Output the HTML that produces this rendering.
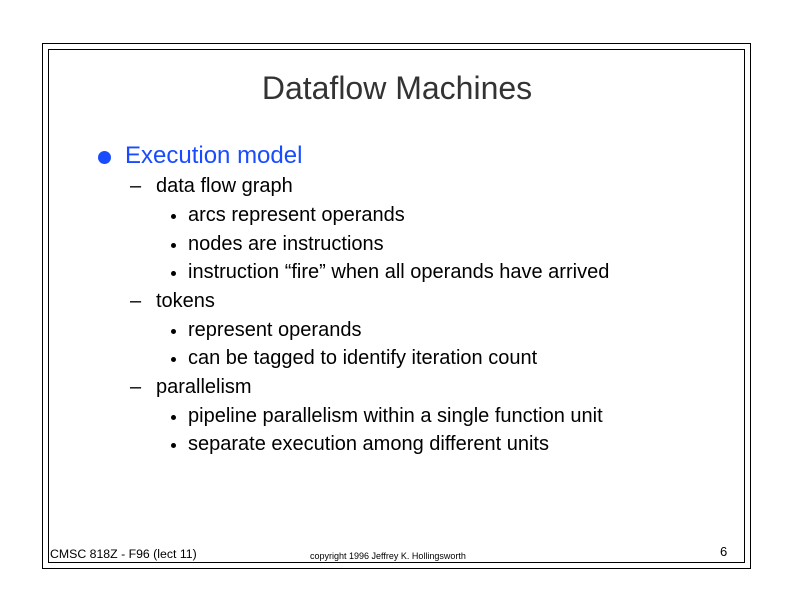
<!DOCTYPE html>
<html><head><style>
body{margin:0;width:792px;height:612px;background:#fff;position:relative;overflow:hidden;font-family:"Liberation Sans",sans-serif;}
.b{position:absolute;border:1.3px solid #000;}
.t{position:absolute;white-space:nowrap;color:#000;}
.l2{font-size:20px;left:156px;}
.l3{font-size:20px;left:188px;}
.d{position:absolute;font-size:20px;left:130px;}
.dot{position:absolute;left:171px;width:5px;height:5px;border-radius:50%;background:#000;}
</style></head><body>
<div class="b" style="left:42px;top:43px;width:707px;height:524px"></div>
<div class="b" style="left:48px;top:49px;width:695px;height:512px"></div>
<div class="t" style="left:0;width:794px;text-align:center;top:70px;font-size:32px;color:#333">Dataflow Machines</div>
<div style="position:absolute;left:98px;top:151px;width:13px;height:13px;border-radius:50%;background:#1a4cff"></div>
<div class="t" style="left:125px;top:142px;font-size:24px;color:#1a4cff">Execution model</div>
<div class="t d" style="top:175px">–</div><div class="t l2" style="top:175px">data flow graph</div>
<div class="dot" style="top:214px"></div><div class="t l3" style="top:204px">arcs represent operands</div>
<div class="dot" style="top:243px"></div><div class="t l3" style="top:233px">nodes are instructions</div>
<div class="dot" style="top:271px"></div><div class="t l3" style="top:261px">instruction “fire” when all operands have arrived</div>
<div class="t d" style="top:290px">–</div><div class="t l2" style="top:290px">tokens</div>
<div class="dot" style="top:329px"></div><div class="t l3" style="top:319px">represent operands</div>
<div class="dot" style="top:357px"></div><div class="t l3" style="top:347px">can be tagged to identify iteration count</div>
<div class="t d" style="top:376px">–</div><div class="t l2" style="top:376px">parallelism</div>
<div class="dot" style="top:415px"></div><div class="t l3" style="top:405px">pipeline parallelism within a single function unit</div>
<div class="dot" style="top:443px"></div><div class="t l3" style="top:433px">separate execution among different units</div>
<div class="t" style="left:50px;top:547px;font-size:12.3px">CMSC 818Z - F96  (lect 11)</div>
<div class="t" style="left:310px;top:551px;font-size:9px">copyright 1996  Jeffrey K. Hollingsworth</div>
<div class="t" style="left:720px;top:544px;font-size:13px">6</div>
</body></html>
